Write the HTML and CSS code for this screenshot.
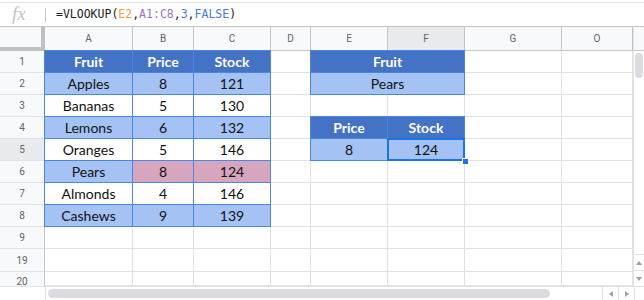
FILE: index.html
```html
<!DOCTYPE html>
<html lang="en">
<head>
  <meta charset="UTF-8" />
  <title>VLOOKUP</title>
  <link rel="stylesheet" href="styles.css">
</head>
<body>

  <div class="formula-bar">
    <span class="fx">fx</span>
    <span class="sep"></span>
    <span class="formula">=VLOOKUP(<span class="f-or">E2</span>,<span class="f-pu">A1:C8</span>,<span class="f-bl">3</span>,<span class="f-bl">FALSE</span>)</span>
  </div>

  <div class="sheet">
    <div class="grid">
      <!-- column headers -->
      <div class="corner"></div>
      <div class="ch">A</div>
      <div class="ch">B</div>
      <div class="ch">C</div>
      <div class="ch">D</div>
      <div class="ch">E</div>
      <div class="ch sel">F</div>
      <div class="ch">G</div>
      <div class="ch">O</div>

      <!-- 1 -->
      <div class="rh">1</div>
      <div class="c t hd tlt">Fruit</div>
      <div class="c t hd tt">Price</div>
      <div class="c t hd tt">Stock</div>
      <div class="c"></div>
      <div class="c t hd tlt span2">Fruit</div>
      <div class="c"></div>
      <div class="c"></div>

      <!-- 2 -->
      <div class="rh">2</div>
      <div class="c t lt tl">Apples</div>
      <div class="c t lt">8</div>
      <div class="c t lt">121</div>
      <div class="c"></div>
      <div class="c t lt tl span2">Pears</div>
      <div class="c"></div>
      <div class="c"></div>

      <!-- 3 -->
      <div class="rh">3</div>
      <div class="c t tl">Bananas</div>
      <div class="c t">5</div>
      <div class="c t">130</div>
      <div class="c"></div>
      <div class="c"></div>
      <div class="c"></div>
      <div class="c"></div>
      <div class="c"></div>

      <!-- 4 -->
      <div class="rh">4</div>
      <div class="c t lt tl">Lemons</div>
      <div class="c t lt">6</div>
      <div class="c t lt">132</div>
      <div class="c"></div>
      <div class="c t hd tlt">Price</div>
      <div class="c t hd tt">Stock</div>
      <div class="c"></div>
      <div class="c"></div>

      <!-- 5 -->
      <div class="rh sel">5</div>
      <div class="c t tl">Oranges</div>
      <div class="c t">5</div>
      <div class="c t">146</div>
      <div class="c"></div>
      <div class="c t lt tl">8</div>
      <div class="c t lt active">124<span class="handle"></span></div>
      <div class="c"></div>
      <div class="c"></div>

      <!-- 6 -->
      <div class="rh">6</div>
      <div class="c t lt tl">Pears</div>
      <div class="c t pk">8</div>
      <div class="c t pk">124</div>
      <div class="c"></div>
      <div class="c"></div>
      <div class="c"></div>
      <div class="c"></div>
      <div class="c"></div>

      <!-- 7 -->
      <div class="rh">7</div>
      <div class="c t tl">Almonds</div>
      <div class="c t">4</div>
      <div class="c t">146</div>
      <div class="c"></div>
      <div class="c"></div>
      <div class="c"></div>
      <div class="c"></div>
      <div class="c"></div>

      <!-- 8 -->
      <div class="rh">8</div>
      <div class="c t lt tl">Cashews</div>
      <div class="c t lt">9</div>
      <div class="c t lt">139</div>
      <div class="c"></div>
      <div class="c"></div>
      <div class="c"></div>
      <div class="c"></div>
      <div class="c"></div>

      <!-- 9 -->
      <div class="rh">9</div>
      <div class="c"></div><div class="c"></div><div class="c"></div><div class="c"></div>
      <div class="c"></div><div class="c"></div><div class="c"></div><div class="c"></div>

      <!-- 19 -->
      <div class="rh">19</div>
      <div class="c"></div><div class="c"></div><div class="c"></div><div class="c"></div>
      <div class="c"></div><div class="c"></div><div class="c"></div><div class="c"></div>

      <!-- 20 -->
      <div class="rh last">20</div>
      <div class="c"></div><div class="c"></div><div class="c"></div><div class="c"></div>
      <div class="c"></div><div class="c"></div><div class="c"></div><div class="c"></div>
    </div>

    <div class="vscroll">
      <div class="vtop"></div>
      <div class="vtrack">
        <div class="vthumb"></div>
      </div>
      <div class="vbtn"><span class="arr up"></span></div>
      <div class="vbtn"><span class="arr down"></span></div>
    </div>
  </div>

  <div class="hscroll">
    <div class="hleft"></div>
    <div class="htrack"><div class="hthumb"></div></div>
    <div class="hbtn"><span class="arr left"></span></div>
    <div class="hbtn"><span class="arr right"></span></div>
    <div class="hcorner"></div>
  </div>

</body>
</html>
```

FILE: styles.css
```css
* {
  box-sizing: border-box;
}

body {
  margin: 0;
  width: 644px;
  height: 300px;
  overflow: hidden;
  background: #ffffff;
  font-family: Roboto, 'Liberation Sans', sans-serif;
}

/* formula bar */
.formula-bar {
  height: 24px;
  margin-top: 2px;
  border-top: 1px solid #e3e3e3;
  display: flex;
  align-items: center;
}

.fx {
  width: 45px;
  padding-left: 12px;
  font-family: 'Liberation Serif', serif;
  font-style: italic;
  font-size: 19px;
  color: #c4c4c4;
  line-height: 1;
  margin-top: -2px;
}

.sep {
  width: 1px;
  height: 14px;
  background: #c8c8c8;
}

.formula {
  margin-left: 10px;
  margin-top: -2px;
  font-family: 'DejaVu Sans Mono', monospace;
  font-size: 11.5px;
  color: #202124;
}

.f-or { color: #f29f35; }
.f-pu { color: #a270c0; }
.f-bl { color: #4a7bd4; }

/* grid */
.sheet {
  display: flex;
  height: 260px;
}

.grid {
  display: grid;
  grid-template-columns: 45px 88px 61px 77px 40px 77px 77px 97px 71px;
  grid-template-rows: 24px repeat(9, 22px) 23px 14px;
  border-top: 1px solid #c4c4c4;
  overflow: hidden;
}

.corner {
  background: #f8f9fa;
  border-right: 4px solid #c0c0c0;
  border-bottom: 4px solid #c0c0c0;
}

.ch {
  background: #f8f9fa;
  border-right: 1px solid #c4c4c4;
  border-bottom: 1px solid #c4c4c4;
  font-size: 10px;
  color: #5f6368;
  display: flex;
  align-items: center;
  justify-content: center;
}

.ch.sel,
.rh.sel {
  background: #e8eaed;
}

.rh {
  background: #f8f9fa;
  border-right: 1px solid #c4c4c4;
  border-bottom: 1px solid #e2e2e2;
  font-size: 10px;
  color: #5f6368;
  display: flex;
  align-items: center;
  justify-content: center;
}

.rh.last {
  border-bottom: none;
  line-height: 12px;
  padding-top: 4px;
  align-items: flex-start;
}

.c {
  border-right: 1px solid #e2e2e2;
  border-bottom: 1px solid #e2e2e2;
  font-family: Lato, 'Open Sans', sans-serif;
  font-size: 14px;
  color: #111;
  display: flex;
  align-items: center;
  justify-content: center;
  position: relative;
}

.span2 {
  grid-column: span 2;
}

/* table cells */
.t {
  border-color: #4a86e8;
}

.tl {
  box-shadow: -1px 0 0 #4a86e8;
}

.tt {
  box-shadow: 0 -1px 0 #4a86e8;
}

.tlt {
  box-shadow: -1px 0 0 #4a86e8, 0 -1px 0 #4a86e8, -1px -1px 0 #4a86e8;
}

.hd {
  background: #4472c4;
  color: #ffffff;
  font-weight: bold;
}

.lt {
  background: #a4c2f4;
}

.pk {
  background: #d5a6bd;
}

.active::after {
  content: "";
  position: absolute;
  left: -1px;
  top: -1px;
  right: -1px;
  bottom: -1px;
  border: 2px solid #1a73e8;
}

.handle {
  position: absolute;
  right: -5px;
  bottom: -5px;
  width: 7px;
  height: 7px;
  background: #1a73e8;
  border: 1px solid #ffffff;
  z-index: 2;
}

/* vertical scrollbar */
.vscroll {
  width: 11px;
  border-left: 1px solid #e2e2e2;
  display: flex;
  flex-direction: column;
}

.vtop {
  height: 25px;
  background: #f8f9fa;
  border-top: 1px solid #c4c4c4;
  border-bottom: 1px solid #c4c4c4;
}

.vtrack {
  flex: 1;
  padding: 2px 0 0 1px;
}

.vthumb {
  width: 8px;
  height: 25px;
  border-radius: 4px;
  background: #dadce0;
}

.vbtn {
  height: 16px;
  border-top: 1px solid #e2e2e2;
  display: flex;
  align-items: center;
  justify-content: center;
}

/* horizontal scrollbar */
.hscroll {
  display: flex;
  height: 14px;
  border-top: 1px solid #e2e2e2;
}

.hleft {
  width: 46px;
  border-right: 1px solid #e2e2e2;
}

.htrack {
  flex: 1;
  padding: 2px 0 0 2px;
}

.hthumb {
  width: 502px;
  height: 9px;
  border-radius: 5px;
  background: #dadce0;
}

.hbtn {
  width: 16px;
  border-left: 1px solid #e2e2e2;
  display: flex;
  align-items: center;
  justify-content: center;
}

.hcorner {
  width: 10px;
  border-left: 1px solid #e2e2e2;
}

.arr {
  width: 0;
  height: 0;
  border: 3px solid transparent;
}

.arr.up { border-bottom: 4px solid #9aa0a6; border-top: none; }
.arr.down { border-top: 4px solid #9aa0a6; border-bottom: none; }
.arr.left { border-right: 4px solid #9aa0a6; border-left: none; }
.arr.right { border-left: 4px solid #9aa0a6; border-right: none; }
```
